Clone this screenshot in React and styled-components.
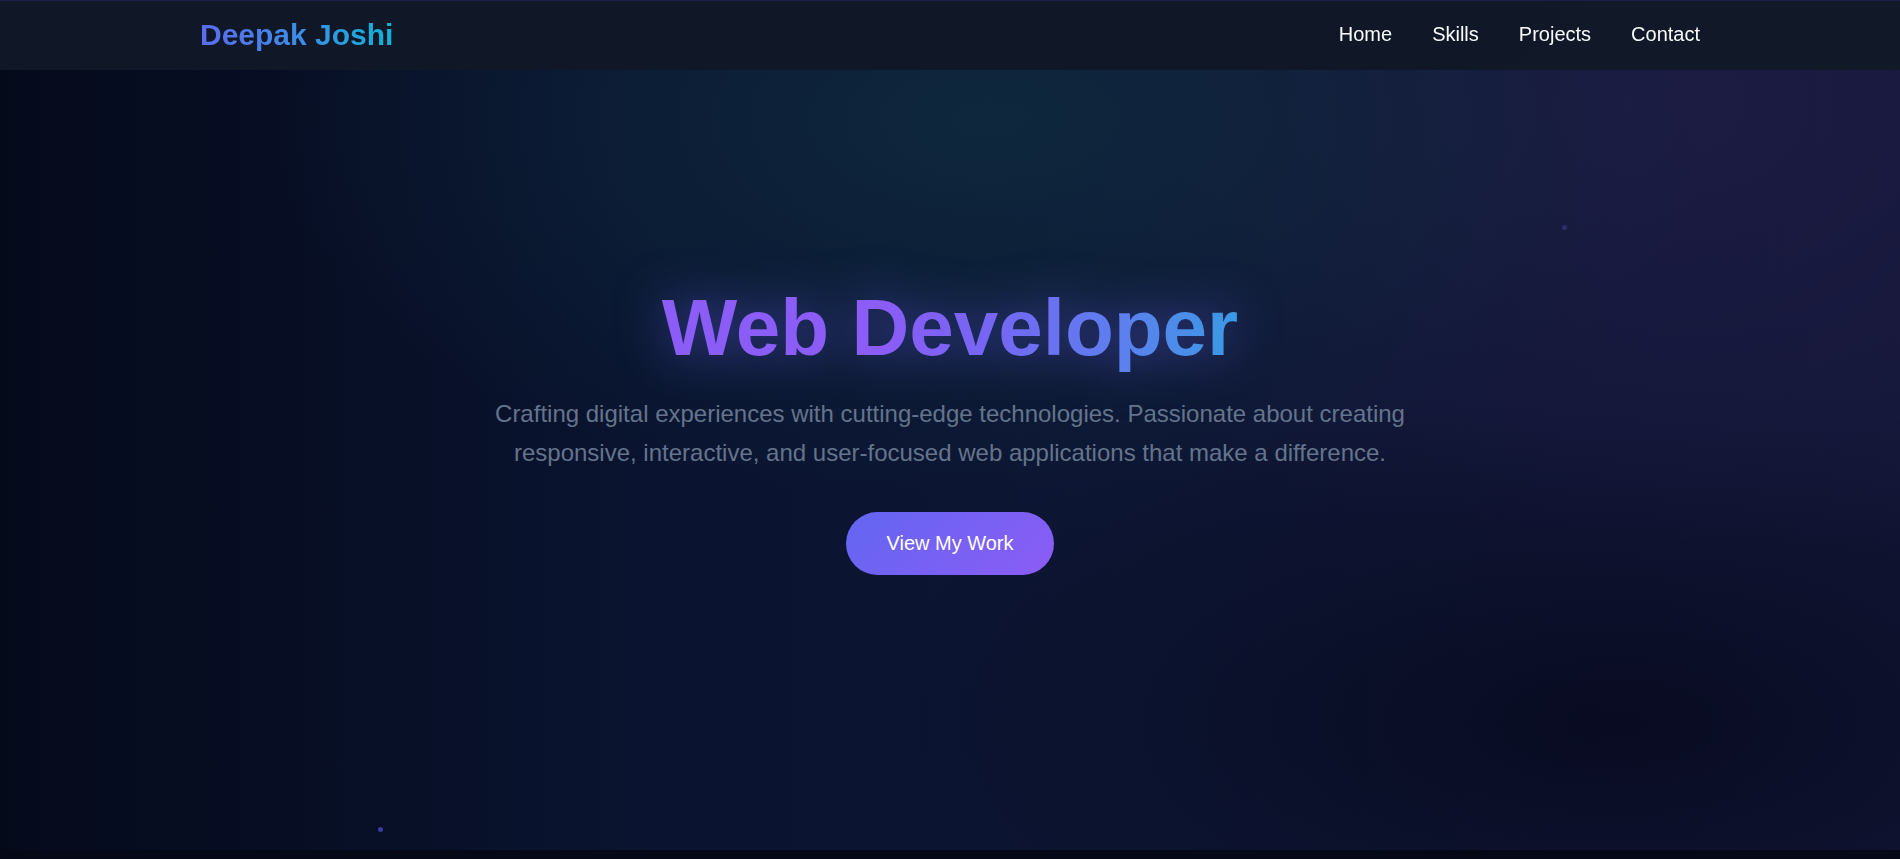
import React from "react";
import styled, { createGlobalStyle } from "styled-components";

const GlobalStyle = createGlobalStyle`
  * { box-sizing: border-box; }
  html, body { margin: 0; padding: 0; }
  body {
    background: #050816;
    font-family: "Liberation Sans", Arial, sans-serif;
    overflow: hidden;
  }
`;

const Header = styled.header`
  position: fixed;
  top: 0;
  left: 0;
  right: 0;
  height: 70px;
  z-index: 10;
  background: rgba(17, 24, 39, 0.96);
  border-top: 1px solid #1c1d4a;
`;

const NavInner = styled.nav`
  max-width: 1500px;
  height: 100%;
  margin: 0 auto;
  padding-bottom: 2px;
  display: flex;
  align-items: center;
  justify-content: space-between;
`;

const Logo = styled.a`
  display: inline-block;
  font-size: 30px;
  font-weight: 700;
  text-decoration: none;
  background: linear-gradient(90deg, #5b6cf1 0%, #3b8fe6 55%, #0fb3d8 100%);
  -webkit-background-clip: text;
  background-clip: text;
  -webkit-text-fill-color: transparent;
`;

const NavList = styled.ul`
  display: flex;
  gap: 40px;
  margin: 0;
  padding: 0;
  list-style: none;
`;

const NavLink = styled.a`
  font-size: 20px;
  color: #f8fafc;
  text-decoration: none;
`;

const Hero = styled.section`
  position: relative;
  height: 850px;
  padding-top: 5px;
  display: flex;
  flex-direction: column;
  align-items: center;
  justify-content: center;
  text-align: center;
  overflow: hidden;
  background:
    radial-gradient(ellipse 38% 45% at 52% 14%, rgba(14, 42, 62, 0.85), rgba(14, 42, 62, 0) 100%),
    radial-gradient(ellipse 35% 55% at 88% 12%, rgba(30, 28, 68, 0.85), rgba(30, 28, 68, 0) 100%),
    radial-gradient(ellipse 40% 40% at 85% 85%, rgba(6, 9, 28, 0.8), rgba(6, 9, 28, 0) 100%),
    linear-gradient(90deg, #050a1b 0%, #0a1430 35%, #0d1634 60%, #121638 85%, #141739 100%);
`;

const Particle = styled.span`
  position: absolute;
  left: ${(p) => p.$x}px;
  top: ${(p) => p.$y}px;
  width: ${(p) => p.$size}px;
  height: ${(p) => p.$size}px;
  border-radius: 50%;
  background: ${(p) => p.$color};
`;

const Title = styled.h1`
  margin: 0 0 19px;
  font-size: 80px;
  font-weight: 700;
  line-height: 1.2;
  filter: drop-shadow(0 0 24px rgba(104, 96, 245, 0.55));
`;

const TitleText = styled.span`
  display: inline-block;
  background: linear-gradient(90deg, #8b5cf6 0%, #8b5cf6 38%, #7467f3 58%, #5c80ee 80%, #3a9ae4 100%);
  -webkit-background-clip: text;
  background-clip: text;
  -webkit-text-fill-color: transparent;
`;

const Subtitle = styled.p`
  max-width: 1000px;
  margin: 0 0 40px;
  font-size: 24px;
  line-height: 1.6;
  color: #64748b;
`;

const CtaButton = styled.button`
  padding: 20px 40px;
  font-family: inherit;
  font-size: 20px;
  line-height: normal;
  color: #ffffff;
  border: none;
  border-radius: 50px;
  cursor: pointer;
  background: linear-gradient(135deg, #6366f1 0%, #8b5cf6 100%);
`;

const Below = styled.section`
  height: 40px;
  background: #050816;
`;

export default function App() {
  return (
    <>
      <GlobalStyle />
      <Header>
        <NavInner>
          <Logo href="#home">Deepak Joshi</Logo>
          <NavList>
            <li><NavLink href="#home">Home</NavLink></li>
            <li><NavLink href="#skills">Skills</NavLink></li>
            <li><NavLink href="#projects">Projects</NavLink></li>
            <li><NavLink href="#contact">Contact</NavLink></li>
          </NavList>
        </NavInner>
      </Header>
      <Hero id="home">
        <Particle $x={1562} $y={225} $size={5} $color="rgba(60, 55, 140, 0.6)" />
        <Particle $x={378} $y={827} $size={5} $color="#3a3aa8" />
        <Title>
          <TitleText>Web Developer</TitleText>
        </Title>
        <Subtitle>
          Crafting digital experiences with cutting-edge technologies. Passionate about creating
          responsive, interactive, and user-focused web applications that make a difference.
        </Subtitle>
        <CtaButton>View My Work</CtaButton>
      </Hero>
      <Below />
    </>
  );
}
